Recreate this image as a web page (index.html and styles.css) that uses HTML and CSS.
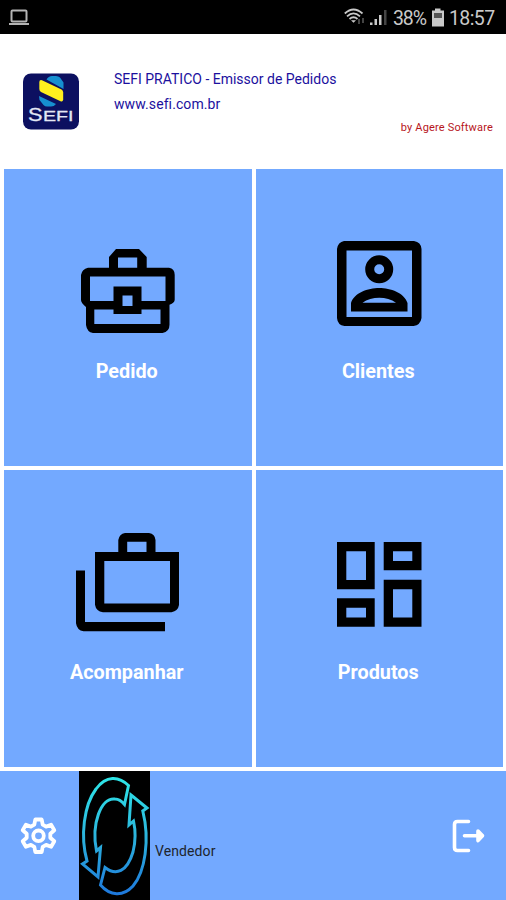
FILE: index.html
```
<!DOCTYPE html>
<html lang="pt-BR">
<head>
<meta charset="utf-8">
<title>SEFI PRATICO</title>
<link rel="stylesheet" href="styles.css">
</head>
<body>
<div class="status">
  <svg class="laptop" viewBox="8 8 22 18" width="22" height="18"><rect x="11.5" y="10.5" width="15" height="11" rx="1"/><path d="M9 24h20"/></svg>
  <svg class="signals" viewBox="343 6 46 22" width="46" height="22">
    <g class="waves"><path d="M344.800 13.500Q353.500 5.500 362.500 13.500M347 16.300Q353.500 10.500 360 16.300M349.500 19Q353.500 15.500 357.500 19"/></g>
    <path class="fill" d="M351 20.300h5l-2.500 2.500zM370 25v-2.500h2.500V25zM374.500 25v-6h2.500v6zM379 25V15h2.500v10z"/>
    <path class="dim" d="M358 24v-5h2v5zM362 23v-5h2v5zM384 25V10h2.500v15z"/>
  </svg>
  <span class="percent">38%</span>
  <svg class="battery" viewBox="431 8 14 20" width="14" height="20"><path class="fill" d="M435 8.500h5.500v2H444v16h-12v-16h3z"/><path class="level" d="M434 13h8v5h-8z"/></svg>
  <span class="clock">18:57</span>
</div>
<header class="header">
  <svg class="logo" viewBox="23 73 57 57" width="57" height="57">
    <rect class="navy" x="23" y="73.500" width="56" height="56" rx="8"/>
    <path class="blue" d="M46.500 79.500q2-3.500 5.500-3.500h4q2.500 0 4 1.500l3.500 5v6.500zM39 96l17 8q-2 2.500-5 2.500h-4q-2 0-3.500-1.500L39.500 100z"/>
    <path class="yellow" d="M39.300 82q.2-2.500 2.700-1.700l19.500 9.200q1.700 1 1.700 3v7q-.2 2.500-2.700 1.700L41 92q-1.700-1-1.700-3z"/>
    <text x="28" y="120.500" class="big" textLength="14.500" lengthAdjust="spacingAndGlyphs">S</text>
    <text x="43" y="120.500" class="small" textLength="30.500" lengthAdjust="spacingAndGlyphs">EFI</text>
  </svg>
  <div class="heading">
    <div class="name">SEFI PRATICO - Emissor de Pedidos</div>
    <div class="site">www.sefi.com.br</div>
    <div class="author">by Agere Software</div>
  </div>
</header>
<main class="grid">
  <section class="tile">
    <svg viewBox="72 227 112 112"><path fill-rule="evenodd" d="M116 249h23l7.700 8v10.700H169q5.700 1 5.700 7v25q0 3-5.200 5v20q0 7-7 8.300H93q-6-1-7-8V307q-5-4-5-7v-25q1-6 7-7.300h21V257zM118 257.500v10.200h19.200V257.500zM90 276.500V301h23.500v-14.500h28V301h24v-24.500zM94.300 309.500V324h66.200v-14.500h-19v4.500h-28v-4.500zM122.500 295.500v10.500h10v-10.500z"/></svg>
    <h2>Pedido</h2>
  </section>
  <section class="tile">
    <svg viewBox="323 227 112 112"><path fill-rule="evenodd" d="M344 241h70q7 1 7.500 8v69q-1 7-8 8h-69q-7-1-7.500-8v-69q1-7 7-8zM346.500 250.500V317H412v-66.500zM379.200 255.300a14 14 0 1 1 0 28 14 14 0 1 1 0-28zM379.200 264.300a5 5 0 1 0 0 10 5 5 0 1 0 0-10zM351 311.500V303c3-10 17-15 28.200-15s25.300 5 28.300 15v8.500zM362.500 302.700H396c-9-6.700-24.500-6.700-33.500 0z"/></svg>
    <h2>Clientes</h2>
  </section>
  <section class="tile">
    <svg viewBox="72 528 112 112"><path fill-rule="evenodd" d="M125 533h24q6 1 6.500 7v12H179v53q-1 6-7.500 7.200H103q-7-1-8-7.500V552h23.300v-12q1-6 6.700-7zM127.200 541.700V552h19.300v-10.300zM104.300 561v42.500H170V561zM76 570.500h9V622h80v9.200H83.500q-6.500-1-7.500-8z"/></svg>
    <h2>Acompanhar</h2>
  </section>
  <section class="tile">
    <svg viewBox="323 528 112 112"><path fill-rule="evenodd" d="M337 542h37.700v47.200H337zM346.300 551.300V580H366v-28.700zM383.700 542h37.800v28.300h-37.800zM393 551.300V561h19.300v-9.700zM337 598.300h37.700v28.500H337zM346.300 607.700v9.800H366v-9.800zM383.700 579.700h37.800v47.100h-37.800zM393 589.200v28.300h19.300v-28.300z"/></svg>
    <h2>Produtos</h2>
  </section>
</main>
<footer class="footer">
  <svg class="gear" viewBox="20 816 38 38" width="38" height="38"><path d="M35.300 819.500h6.400l1 5.100 3.400 2 5-1.800 3.200 5.500-4 3.500v3.900l4 3.500-3.200 5.500-5-1.800-3.400 2-1 5.100h-6.400l-1-5.100-3.400-2-5 1.800-3.200-5.500 4-3.500v-3.900l-4-3.500 3.200-5.500 5 1.800 3.400-2z"/><circle cx="38.500" cy="835.800" r="5.300"/></svg>
  <svg class="sync" viewBox="79 771 71 129" width="71" height="129">
    <defs><linearGradient id="g" gradientUnits="userSpaceOnUse" x1="0" y1="777" x2="0" y2="895"><stop offset="0" stop-color="#2ee6e8"/><stop offset=".5" stop-color="#2cb4dc"/><stop offset="1" stop-color="#1e78dc"/></linearGradient></defs>
    <path d="M128.500 785.500C119 776 106 775 96 789 84 805 80 836 87 861L82.500 864 98 877 100.500 847.500 96.500 851C91 824 101 797 115 799Q120 799 124.500 804.500zM131 795L147 808 142.800 811C150 840 145 872 133 886 123 897 110 896 100.500 885L105 867.500C116 876 127 872 133 852 136 840 136 832 133.500 821L129 825z" stroke="url(#g)"/>
  </svg>
  <span class="seller">Vendedor</span>
  <svg class="exit" viewBox="450 816 38 40" width="38" height="40"><path d="M468.500 821.500h-11q-3 0-3 3v23q0 3 3 3h11M464.500 835.800H482"/><path d="M478 831l4.500 4.800-4.500 4.800z" fill="#fff"/></svg>
</footer>
</body>
</html>
```
FILE: styles.css
```
* { box-sizing: border-box; }
body { margin: 0; width: 506px; height: 900px; overflow: hidden; background: #fff; font-family: Roboto, sans-serif; display: flex; flex-direction: column; }
svg { display: block; flex: none; }
.status { height: 34px; background: #000; color: #c9c9c9; display: flex; padding-left: 8px; font-size: 19.5px; line-height: 37px; white-space: nowrap; }
.laptop { margin-top: 8px; fill: none; stroke: #b4b4b4; stroke-width: 2; }
.signals { margin: 6px 0 0 313px; }
.waves { fill: none; stroke: #c9c9c9; stroke-width: 1.800; }
.fill { fill: #c9c9c9; }
.dim { fill: #444; }
.level { fill: #555; }
.percent { width: 38px; margin-left: 4px; letter-spacing: -1.100px; }
.battery { margin-top: 8px; }
.clock { margin-left: 4px; letter-spacing: -.6px; }
.header { height: 135px; display: flex; padding-left: 23px; }
.logo { margin-top: 39px; }
.navy { fill: #0c1060; }
.blue { fill: #168fd0; }
.yellow { fill: #fff01e; }
.logo text { fill: #e4e7f4; font-family: "Liberation Sans", sans-serif; stroke: #e4e7f4; stroke-width: .3; }
.big { font-size: 18.500px; }
.small { font-size: 15px; }
.heading { flex: 1; padding: 35px 13px 0 34px; color: #1b109e; font-size: 14px; line-height: 20px; white-space: nowrap; }
.name { letter-spacing: 0; }
.site { margin-top: 5px; letter-spacing: .1px; }
.author { margin-top: 6px; line-height: 16px; font-size: 11px; letter-spacing: .17px; text-align: right; color: #b7161c; }
.grid { height: 598px; margin: 0 3px 0 4px; display: grid; grid-template-columns: 1fr 1fr; grid-template-rows: 1fr 1fr; gap: 4px; }
.tile { background: #73a9ff; display: flex; flex-direction: column; align-items: center; padding-top: 58px; }
.tile svg { width: 112px; height: 112px; }
.tile h2 { margin: 21px 2px 0 0; font-size: 19.800px; line-height: 24px; font-weight: 700; color: #fff; }
.footer { height: 129px; margin-top: 4px; background: #73a9ff; display: flex; padding-left: 20px; }
.gear { margin-top: 45px; fill: none; stroke: #fff; stroke-width: 3.800; stroke-linejoin: round; }
.sync { margin-left: 21px; background: #000; fill: none; stroke-width: 3; }
.seller { margin: 70px 0 0 5px; font-size: 14px; line-height: 20px; color: #20242c; letter-spacing: .1px; }
.exit { margin: 45px 18px 0 auto; fill: none; stroke: #fff; stroke-width: 3.600; stroke-linecap: round; stroke-linejoin: round; }
```
